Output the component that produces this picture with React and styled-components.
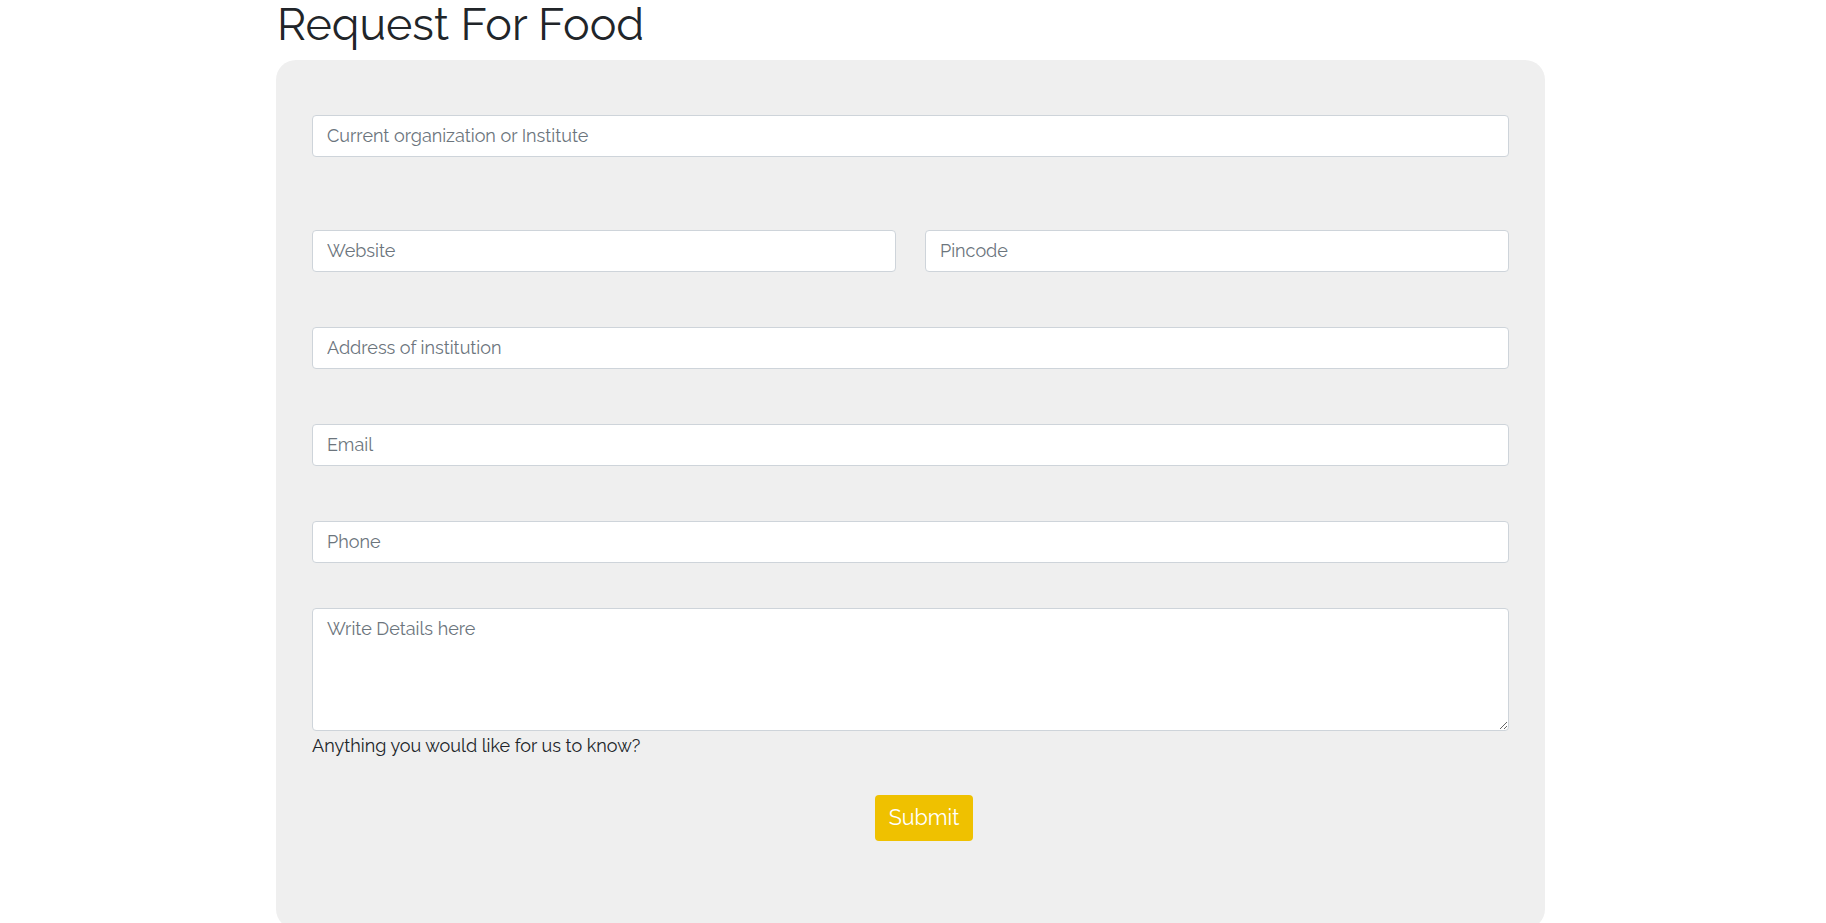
import React from 'react';
import styled, { createGlobalStyle } from 'styled-components';

const GlobalStyle = createGlobalStyle`
  body {
    margin: 0;
    background: #ffffff;
    font-family: 'Raleway', 'Lato', sans-serif;
    color: #212529;
  }
`;

const Page = styled.div`
  width: 1269px;
  margin: 0 0 0 276px;
`;

const Title = styled.h1`
  margin: -2px 0 8px;
  font-size: 44.8px;
  font-weight: 400;
  line-height: 1.2;
  color: #212529;
  padding-left: 1px;
`;

const Card = styled.form`
  background: #efefef;
  border-radius: 20px;
  padding: 55px 36px 88px;
  display: flex;
  flex-direction: column;
`;

const Group = styled.div`
  margin-bottom: ${props => props.$space}px;
`;

const Row = styled.div`
  display: grid;
  grid-template-columns: 1fr 1fr;
  gap: 29px;
  margin-bottom: ${props => props.$space}px;
`;

const Input = styled.input`
  display: block;
  box-sizing: border-box;
  width: 100%;
  height: 42px;
  padding: 0 14px;
  border: 1px solid #ced4da;
  border-radius: 4px;
  background: #fff;
  font-family: inherit;
  font-size: 18px;
  color: #495057;
  outline: none;

  &::placeholder {
    color: #6c757d;
    opacity: 1;
  }
`;

const TextArea = styled.textarea`
  display: block;
  box-sizing: border-box;
  width: 100%;
  height: 123px;
  padding: 6px 14px;
  border: 1px solid #ced4da;
  border-radius: 4px;
  background: #fff;
  font-family: inherit;
  font-size: 18px;
  line-height: 1.5;
  color: #495057;
  outline: none;
  resize: vertical;

  &::placeholder {
    color: #6c757d;
    opacity: 1;
  }
`;

const Help = styled.small`
  display: block;
  margin-top: 1px;
  font-size: 18px;
  line-height: 1.5;
  color: #212529;
`;

const Actions = styled.div`
  display: flex;
  justify-content: center;
  padding-left: 27px;
  margin-top: 36px;
`;

const SubmitButton = styled.button`
  height: 46px;
  padding: 0 14px;
  border: none;
  border-radius: 4px;
  background: #efc100;
  color: #ffffff;
  font-family: inherit;
  font-size: 21.5px;
  cursor: pointer;
`;

export default function App() {
  return (
    <>
      <GlobalStyle />
      <Page>
        <Title>Request For Food</Title>
        <Card onSubmit={e => e.preventDefault()}>
          <Group $space={73}>
            <Input placeholder="Current organization or Institute" />
          </Group>
          <Row $space={55}>
            <Input placeholder="Website" />
            <Input placeholder="Pincode" />
          </Row>
          <Group $space={55}>
            <Input placeholder="Address of institution" />
          </Group>
          <Group $space={55}>
            <Input placeholder="Email" />
          </Group>
          <Group $space={45}>
            <Input placeholder="Phone" />
          </Group>
          <Group $space={0}>
            <TextArea placeholder="Write Details here" />
            <Help>Anything you would like for us to know?</Help>
          </Group>
          <Actions>
            <SubmitButton type="submit">Submit</SubmitButton>
          </Actions>
        </Card>
      </Page>
    </>
  );
}
